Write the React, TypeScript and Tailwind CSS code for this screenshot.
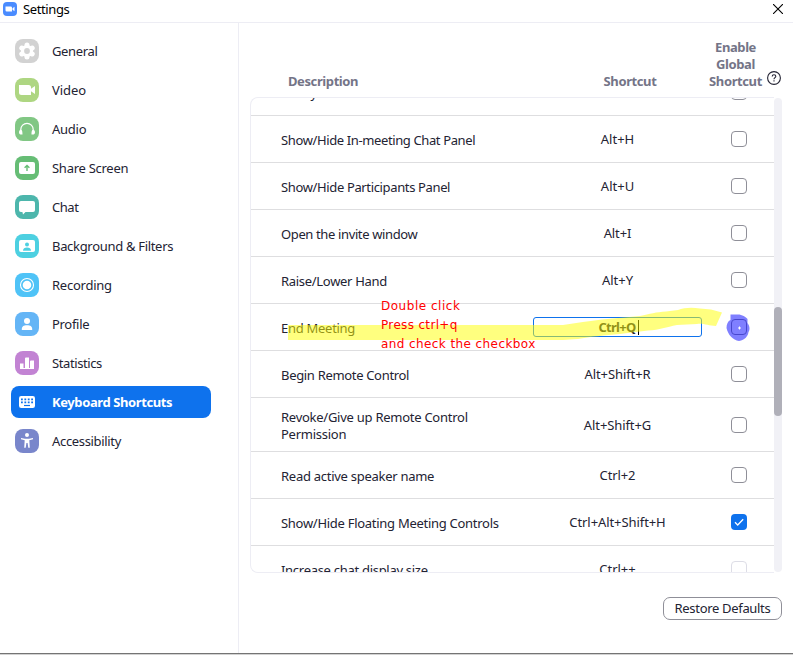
import React from "react";

const sans = "font-['Noto_Sans','Open_Sans',sans-serif]";

type NavItem = { label: string; tile: string; tracking: string; icon: React.ReactNode; active?: boolean };

const navItems: NavItem[] = [
  {
    label: "General",
    tile: "bg-[#d2d2d2]",
    tracking: "tracking-[-0.35px]",
    icon: (
      <>
        <path
          d="M12 6v12M6.800 9l10.400 6M17.200 9 6.800 15"
          stroke="#fff"
          strokeWidth="5"
          strokeLinecap="round"
        />
        <circle cx="12" cy="12" r="6" fill="#fff" />
        <circle cx="12" cy="12" r="2.900" fill="#d2d2d2" />
      </>
    ),
  },
  {
    label: "Video",
    tile: "bg-[#aed682]",
    tracking: "tracking-[-0.05px]",
    icon: (
      <>
        <path d="M4 7h9.5a2.5 2.5 0 0 1 2.5 2.5V17H6.500a2.500 2.500 0 0 1-2.500-2.500z" fill="#fff" />
        <path d="M16 10.800 20 8v8l-4-2.800z" fill="#fff" />
      </>
    ),
  },
  {
    label: "Audio",
    tile: "bg-[#81c784]",
    tracking: "tracking-[-0.25px]",
    icon: (
      <>
        <path d="M5.800 14v-1.500a6.200 6.200 0 0 1 12.400 0V14" fill="none" stroke="#fff" strokeWidth="1.200" />
        <path d="M5.700 12.800c1.100 0 1.800.9 1.800 4.700-2.500.4-3.500-.8-3.500-2.300 0-1.400.8-2.400 1.700-2.400zM18.300 12.800c-1.100 0-1.800.9-1.800 4.700 2.500.4 3.500-.8 3.500-2.300 0-1.400-.8-2.400-1.700-2.400z" fill="#fff" />
      </>
    ),
  },
  {
    label: "Share Screen",
    tile: "bg-[#66bd75]",
    tracking: "tracking-[-0.27px]",
    icon: (
      <>
        <rect x="4" y="6" width="16" height="12" rx="2" fill="#fff" />
        <path d="M12 15V9.700M9.600 11.700 12 9.400l2.400 2.300" fill="none" stroke="#66bd75" strokeWidth="1.400" />
      </>
    ),
  },
  {
    label: "Chat",
    tile: "bg-[#4db6ac]",
    tracking: "tracking-[-0.45px]",
    icon: <path d="M6 6h12a2 2 0 0 1 2 2v7a2 2 0 0 1-2 2h-7.500L8 19.500 7.400 17H6a2 2 0 0 1-2-2V8a2 2 0 0 1 2-2z" fill="#fff" />,
  },
  {
    label: "Background & Filters",
    tile: "bg-[#4dd0e1]",
    tracking: "tracking-[-0.31px]",
    icon: (
      <>
        <rect x="4" y="6" width="16" height="12" rx="2" fill="#fff" />
        <circle cx="12" cy="10.500" r="2" fill="#4dd0e1" />
        <path d="M8 16.800c0-2.300 1.700-3.300 4-3.300s4 1 4 3.300z" fill="#4dd0e1" />
      </>
    ),
  },
  {
    label: "Recording",
    tile: "bg-[#4fc3f7]",
    tracking: "tracking-[-0.24px]",
    icon: (
      <>
        <circle cx="12" cy="12" r="6.500" fill="none" stroke="#fff" strokeWidth="1.100" />
        <circle cx="12" cy="12" r="4.300" fill="#fff" />
      </>
    ),
  },
  {
    label: "Profile",
    tile: "bg-[#64b5f6]",
    tracking: "tracking-[-0.3px]",
    icon: (
      <>
        <circle cx="12" cy="9" r="3" fill="#fff" />
        <path d="M6.800 18c-.3-3.400 1.700-4.700 5.200-4.700s5.500 1.300 5.200 4.700z" fill="#fff" />
      </>
    ),
  },
  {
    label: "Statistics",
    tile: "bg-[#c283d3]",
    tracking: "tracking-[-0.4px]",
    icon: <path d="M5 12.500h3.500V17h1.500V7.500a1 1 0 0 1 1-1h3V17h1V10.500a1 1 0 0 1 1-1h3V18H5z" fill="#fff" />,
  },
  {
    label: "Keyboard Shortcuts",
    tile: "",
    tracking: "tracking-[-0.4px]",
    active: true,
    icon: (
      <>
        <rect x="4" y="6" width="16" height="12" rx="2.200" fill="#fff" />
        <path d="M6 9.300h12M6 12.300h12" stroke="#0e72ed" strokeWidth="1.800" strokeDasharray="1.800 1.600" />
        <path d="M9 15.500h6" stroke="#0e72ed" strokeWidth="1.200" />
      </>
    ),
  },
  {
    label: "Accessibility",
    tile: "bg-[#7986cb]",
    tracking: "tracking-[-0.33px]",
    icon: (
      <>
        <circle cx="12" cy="6" r="2" fill="#fff" />
        <path d="M6 9l4 .7h4l4-.7v1.300l-3.700.9.500 7.600h-1.500L12.600 14h-1.200l-.7 4.800H9.200l.5-7.600L6 10.300z" fill="#fff" />
      </>
    ),
  },
];

type Row = { label: string; keys: string; tracking: string; keyTracking: string; tall?: boolean; state?: "on" | "edit" | "off" };

const rows: Row[] = [
  { label: "Show/Hide In-meeting Chat Panel", keys: "Alt+H", tracking: "tracking-[-0.38px]", keyTracking: "tracking-[0px]" },
  { label: "Show/Hide Participants Panel", keys: "Alt+U", tracking: "tracking-[-0.36px]", keyTracking: "tracking-[0px]" },
  { label: "Open the invite window", keys: "Alt+I", tracking: "tracking-[-0.37px]", keyTracking: "tracking-[-0.1px]" },
  { label: "Raise/Lower Hand", keys: "Alt+Y", tracking: "tracking-[-0.3px]", keyTracking: "tracking-[0px]" },
  { label: "End Meeting", keys: "Ctrl+Q", tracking: "tracking-[-0.28px]", keyTracking: "tracking-[-0.7px]", state: "edit" },
  { label: "Begin Remote Control", keys: "Alt+Shift+R", tracking: "tracking-[-0.32px]", keyTracking: "tracking-[-0.1px]" },
  { label: "Revoke/Give up Remote Control Permission", keys: "Alt+Shift+G", tracking: "tracking-[-0.26px]", keyTracking: "tracking-[-0.1px]", tall: true },
  { label: "Read active speaker name", keys: "Ctrl+2", tracking: "tracking-[-0.27px]", keyTracking: "tracking-[-0.1px]" },
  { label: "Show/Hide Floating Meeting Controls", keys: "Ctrl+Alt+Shift+H", tracking: "tracking-[-0.28px]", keyTracking: "tracking-[-0.08px]", state: "on" },
];

function Checkbox({ checked = false, faint = false }: { checked?: boolean; faint?: boolean }) {
  if (checked) {
    return (
      <div className="flex size-4 items-center justify-center rounded-[4px] bg-[#0e72ed]">
        <svg width="16" height="16" viewBox="0 0 16 16" fill="none">
          <path d="M4 8.300 6.700 11 12.200 5.200" stroke="#fff" strokeWidth="1.300" />
        </svg>
      </div>
    );
  }
  return <div className={`size-4 rounded-[4px] border bg-white ${faint ? "border-[#dddde6]" : "border-[#8f8f98]"}`} />;
}

function TableRow({ row }: { row: Row }) {
  return (
    <div className={`flex shrink-0 items-center border-b border-[#dedee0] ${row.tall ? "h-[54px]" : "h-[47px]"}`}>
      <div className={`ml-[30px] w-[252px] pt-[3px] leading-[17px] whitespace-nowrap ${row.tracking}`}>
        <div className={row.tall ? "w-[200px] whitespace-normal" : ""}>{row.label}</div>
      </div>
      {row.state === "edit" ? (
        <div className="flex h-5 w-[169px] items-center justify-center rounded-[3px] border border-[#0e72ed] font-bold leading-[17px]">
          <span className={`ml-[2px] ${row.keyTracking}`}>{row.keys}</span>
          <span className="ml-[2px] h-[15px] w-px bg-black" />
        </div>
      ) : (
        <div className={`w-[169px] pt-px text-center leading-[17px] whitespace-nowrap ${row.keyTracking}`}>{row.keys}</div>
      )}
      <div className="ml-[29px]">
        <Checkbox checked={row.state === "on"} />
      </div>
    </div>
  );
}

export default function App() {
  return (
    <div className={`relative flex h-[655px] w-[793px] flex-col overflow-hidden bg-white text-[13px] text-[#232333] ${sans}`}>
      <header className="flex h-[23px] shrink-0 items-center border-b border-[#ededf4]">
        <svg className="mb-[4px] ml-[3px]" width="14" height="14" viewBox="0 0 14 14">
          <rect width="14" height="14" rx="4" fill="#4a8cff" />
          <path d="M2.500 4.500h5.300a1.200 1.200 0 0 1 1.200 1.200v3.800H3.700a1.200 1.200 0 0 1-1.200-1.200zM9.500 6.300l2-1.500v4.500l-2-1.500z" fill="#fff" />
        </svg>
        <span className="mb-[4px] ml-[6px] leading-[18px] tracking-[-0.38px] text-black">Settings</span>
        <svg className="mr-[10px] mb-[4px] ml-auto" width="10" height="10" viewBox="0 0 10 10">
          <path d="M0 0l10 10M10 0L0 10" stroke="#000" strokeWidth="1.100" />
        </svg>
      </header>
      <div className="flex min-h-0 flex-1">
        <nav className="flex w-[239px] shrink-0 flex-col gap-[7px] border-r border-[#ededf4] pt-3 pl-[11px]">
          {navItems.map((item) => (
            <div key={item.label} className={`flex h-8 w-[200px] items-center rounded-lg pl-1 ${item.active ? "bg-[#0e72ed] font-bold text-white" : ""}`}>
              <div className={`size-6 rounded-[8px] ${item.tile}`}>
                <svg width="24" height="24" viewBox="0 0 24 24">{item.icon}</svg>
              </div>
              <span className={`ml-[13px] leading-[18px] whitespace-nowrap ${item.tracking}`}>{item.label}</span>
            </div>
          ))}
        </nav>
        <main className="flex flex-1 flex-col pl-[11px]">
          <div className="flex h-[74px] items-end pb-[7px] font-bold leading-[17px] tracking-[-0.4px] text-[#747487]">
            <div className="ml-[38px] w-[266px]">Description</div>
            <div className="w-[152px] text-center">Shortcut</div>
            <div className="w-[59px] text-center">Enable Global Shortcut</div>
            <svg className="mb-[5px] ml-[2px]" width="14" height="14" viewBox="0 0 14 14" fill="none">
              <circle cx="7" cy="7" r="6.400" stroke="#232333" strokeWidth="1.100" />
              <path d="M5.200 5.500c0-1.100.8-1.800 1.800-1.800s1.800.7 1.800 1.600c0 1.300-1.800 1.400-1.800 2.900M7 9.200v1.200" stroke="#232333" strokeWidth="1.100" />
            </svg>
          </div>
          <div className="flex h-[476px] w-[532px]">
            <div className="flex w-[524px] flex-col overflow-hidden rounded-l-[8px] border border-r-0 border-[#ededf4]">
              <div className="flex h-[18px] shrink-0 items-end overflow-hidden border-b border-[#dedee0]">
                <div className="mb-[13px] ml-[30px] w-[450px] leading-[17px] tracking-[-0.3px] whitespace-nowrap">Ready</div>
                <div className="mb-[15px]">
                  <Checkbox />
                </div>
              </div>
              {rows.map((row) => (
                <TableRow key={row.label} row={row} />
              ))}
              <div className="flex h-[46px] shrink-0 items-center">
                <div className="ml-[30px] w-[252px] pt-[3px] leading-[17px] tracking-[-0.29px]">Increase chat display size</div>
                <div className="w-[169px] pt-px text-center leading-[17px]">Ctrl++</div>
                <div className="ml-[29px]">
                  <Checkbox faint />
                </div>
              </div>
            </div>
            <div className="mt-px h-[474px] w-2 rounded bg-[#f1f1f6] pt-[209px]">
              <div className="h-[109px] rounded bg-[#b0b0b9]" />
            </div>
          </div>
          <button className="mt-6 ml-[413px] h-[23px] w-[119px] rounded-[7px] border border-[#8f8f98] pb-[2px] leading-[18px] tracking-[-0.32px]">
            Restore Defaults
          </button>
        </main>
      </div>
      <div className="h-[2px] shrink-0 border-t border-[#747474] bg-[#d2d2d2]" />
      <svg className="absolute top-0 left-0" width="793" height="655" viewBox="0 0 793 655">
        <path d="M288 325H563C576 323 590 321 602 319.500L640 316C650 314 656 312 666 311.500L678 310C684 307.500 692 307 700 308.500L711 309.500L722 312.500L716 326C708 326 704 323 697 324L677 325C666 327 660 330 648 330.500L620 334C605 335 590 337 578 339L563 340H288Z" fill="#ffff00" fillOpacity=".5" />
        <path d="M730.500 314.500H738C742 314.500 746 317 747.500 319V323C750 326 750 330 748.500 332C748 336 745 340 739 341C733 340 728 335 726.500 328C726.500 324 728 321 730.500 320Z" fill="#0000ff" fillOpacity=".5" />
        <path d="M739.500 326.500v3M738 328h3" stroke="#fff" strokeWidth="1" />
      </svg>
      <div className="absolute top-[297px] left-[381px] font-['DejaVu_Sans','Noto_Sans',sans-serif] text-[12px] leading-[19px] whitespace-nowrap text-[#ff0000]">
        <div className="tracking-[0.52px]">Double click</div>
        <div className="tracking-[0.34px]">Press ctrl+q</div>
        <div className="tracking-[0.41px]">and check the checkbox</div>
      </div>
    </div>
  );
}
